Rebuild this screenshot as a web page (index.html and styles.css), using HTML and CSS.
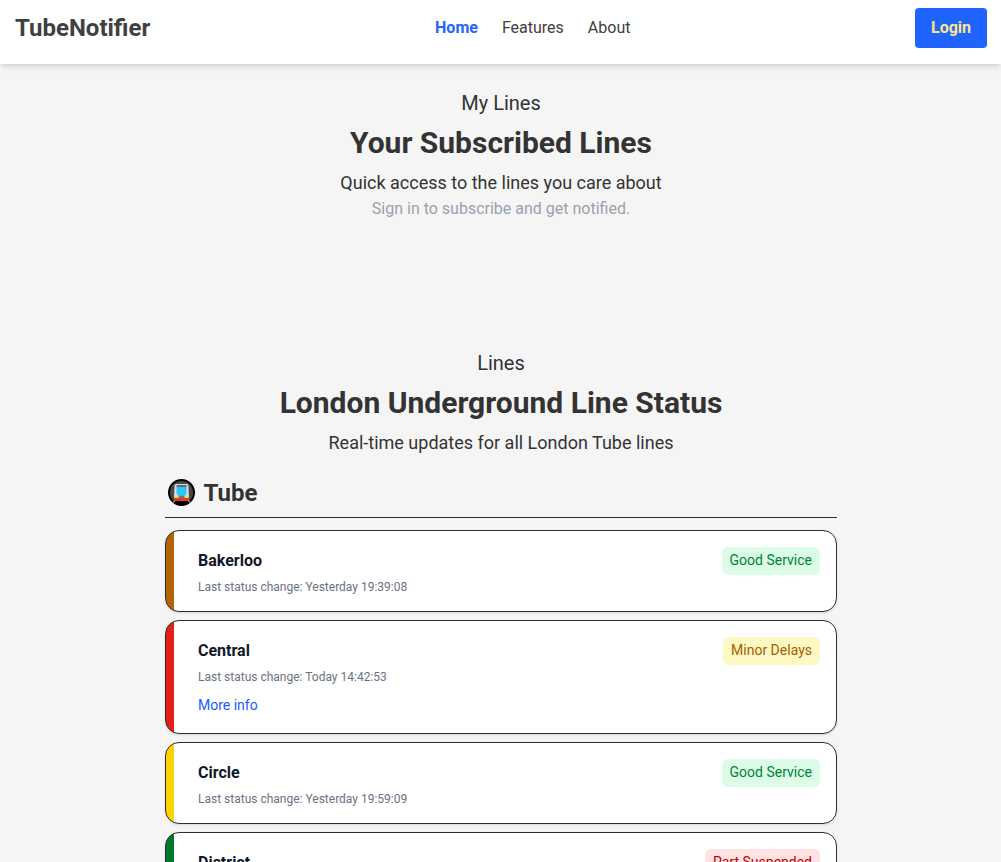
FILE: index.html
```html
<!DOCTYPE html>
<html lang="en">
<head>
<meta charset="utf-8">
<title>TubeNotifier</title>
<link rel="stylesheet" href="styles.css">
</head>
<body>
<header class="header">
  <a class="brand">TubeNotifier</a>
  <nav class="nav">
    <a class="nav-link active">Home</a>
    <a class="nav-link">Features</a>
    <a class="nav-link">About</a>
  </nav>
  <button class="login">Login</button>
</header>
<main>
  <section class="intro my-lines">
    <p class="eyebrow">My Lines</p>
    <h2 class="title">Your Subscribed Lines</h2>
    <p class="subtitle">Quick access to the lines you care about</p>
    <p class="hint">Sign in to subscribe and get notified.</p>
  </section>
  <section class="intro">
    <p class="eyebrow">Lines</p>
    <h2 class="title">London Underground Line Status</h2>
    <p class="subtitle">Real-time updates for all London Tube lines</p>
  </section>
  <section class="lines">
    <h3 class="mode">
      <svg class="mode-icon" viewBox="0 0 27 27" width="27" height="27" aria-hidden="true">
        <circle cx="13.500" cy="13.500" r="12.500" fill="#484848" stroke="#000" stroke-width="2"/>
        <path d="M4 21.500h19l-3 3.300Q13.500 28 7 24.800Z" fill="#000"/>
        <path d="M8 5h11q1.300 0 1.400 1.500L21 19H6L6.600 6.500Q6.700 5 8 5Z" fill="#dcdedf"/>
        <path d="M8.500 6h10v2h-10Z" fill="#66696c"/>
        <path d="M8.500 8h10v6.500L16.500 17h-6l-2-2.500Z" fill="#26c9fc"/>
        <path d="M6 18.700h15v2.500q-7.500 2-15 0Z" fill="#f03a17"/>
        <path d="M10.500 16.800h6v2.400h-6Z" fill="#77777a"/>
        <circle cx="8" cy="17.800" r="1.200" fill="#ffd83d"/>
        <circle cx="19" cy="17.800" r="1.200" fill="#ffd83d"/>
        <path d="M7 21.500 5 23.300M20 21.500l2 1.800" stroke="#eee" stroke-width="1"/>
      </svg>
      <span>Tube</span>
    </h3>
    <ul class="cards">
      <li class="card bakerloo">
        <div class="row"><h4 class="name">Bakerloo</h4><span class="badge good">Good Service</span></div>
        <p class="changed">Last status change: Yesterday 19:39:08</p>
      </li>
      <li class="card central">
        <div class="row"><h4 class="name">Central</h4><span class="badge minor">Minor Delays</span></div>
        <p class="changed">Last status change: Today 14:42:53</p>
        <div class="more"><a>More info</a></div>
      </li>
      <li class="card circle">
        <div class="row"><h4 class="name">Circle</h4><span class="badge good">Good Service</span></div>
        <p class="changed">Last status change: Yesterday 19:59:09</p>
      </li>
      <li class="card district">
        <div class="row"><h4 class="name">District</h4><span class="badge suspended">Part Suspended</span></div>
      </li>
    </ul>
  </section>
</main>
</body>
</html>
```

FILE: styles.css
```css
* { box-sizing: border-box; margin: 0; padding: 0; }
html { overflow: hidden; height: 100%; }
body {
  height: 100%;
  overflow: hidden;
  background: #f5f5f5;
  color: #333;
  font: 16px/24px Roboto, sans-serif;
}
.header {
  display: grid;
  grid-template-columns: 1fr auto 1fr;
  align-items: start;
  height: 64px;
  padding: 8px 14px 0 15px;
  background: #fff;
  color: #404040;
  box-shadow: 0 4px 6px -1px rgba(0,0,0,.1), 0 2px 4px -2px rgba(0,0,0,.1);
}
.brand { font-size: 24px; line-height: 40px; font-weight: 700; }
.nav { display: flex; gap: 24px; line-height: 40px; margin-left: 63.5px; }
.active { color: #1f64ff; font-weight: 700; }
.login {
  justify-self: end;
  width: 72px;
  height: 40px;
  border: 0;
  border-radius: 4px;
  background: #1f64ff;
  color: #fde68a;
  font: 700 16px/40px Roboto, sans-serif;
}
.intro { padding: 25px 0 0 1px; text-align: center; }
.my-lines { height: 260px; }
.eyebrow { font-size: 20px; line-height: 28px; }
.title { margin-top: 8px; font-size: 30px; line-height: 36px; font-weight: 700; }
.subtitle { margin-top: 8px; font-size: 18px; line-height: 28px; }
.hint { color: #99a1af; }
.lines { width: 672px; margin: 15px auto 0 165px; }
.mode {
  display: flex;
  align-items: center;
  gap: 8.5px;
  height: 46px;
  padding: 0 0 4px 3px;
  border-bottom: 1px solid #2d2e32;
  font-size: 24px;
  font-weight: 700;
}
.mode-icon { display: block; }
.cards { display: grid; gap: 8px; margin-top: 12px; list-style: none; }
.card {
  overflow: hidden;
  padding: 16px 16px 16px 32px;
  border: 1px solid #2d2e32;
  border-radius: 14px;
  box-shadow: 0 1px 3px rgba(0,0,0,.1), 0 1px 2px -1px rgba(0,0,0,.1);
  background: linear-gradient(to right, var(--line) 8px, #fff 8px);
}
.bakerloo { --line: #b36305; }
.central { --line: #e32017; }
.circle { --line: #ffd300; }
.district { --line: #00782a; height: 82px; }
.row { display: flex; justify-content: space-between; align-items: center; }
.name { font-size: 16px; font-weight: 700; color: #101828; }
.badge { padding: 3px 8px 5px; border-radius: 6px; font-size: 14px; line-height: 20px; }
.good { background: #dcfce7; color: #008236; }
.minor { background: #fef9c2; color: #a65f00; }
.suspended { background: #ffe2e2; color: #c10007; }
.changed { margin-top: 4px; font-size: 12px; line-height: 16px; color: #6a7282; }
.more { margin-top: 8px; color: #155dfc; }
.more a { font-size: 14px; }
```
